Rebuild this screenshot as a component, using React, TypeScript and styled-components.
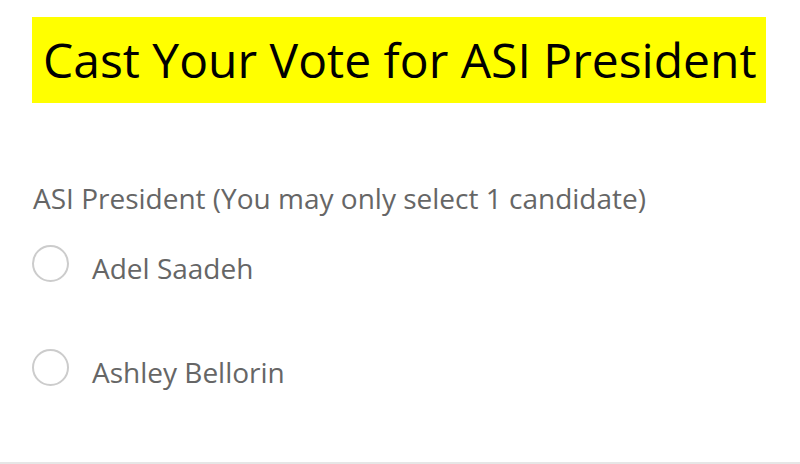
import React from 'react';
import styled, { createGlobalStyle } from 'styled-components';

const GlobalStyle = createGlobalStyle`
   html, body {
      margin: 0;
      padding: 0;
      background: #ffffff;
   }
   body {
      font-family: 'Open Sans', 'Noto Sans', sans-serif;
   }
`;

const Page = styled.div`
   width: 800px;
   height: 464px;
   box-sizing: border-box;
   border-bottom: 2px solid #e6e6e6;
   padding: 17px 0 0 32px;
   display: flex;
   flex-direction: column;
   align-items: flex-start;
`;

const Title = styled.h1`
   margin: 0;
   background: #ffff00;
   color: #000000;
   font-weight: 400;
   font-size: 48px;
   line-height: 86px;
   height: 86px;
   padding: 0 9px 0 11px;
   white-space: nowrap;
`;

const Question = styled.p`
   margin: 77px 0 0 1px;
   font-size: 28px;
   line-height: 36px;
   color: #666666;
`;

const Options = styled.div`
   display: flex;
   flex-direction: column;
   gap: 59px;
   margin-top: 25px;
`;

const Option = styled.label`
   display: flex;
   align-items: center;
   gap: 23px;
   font-size: 28px;
   color: #666666;
   cursor: pointer;
`;

const Radio = styled.span`
   width: 37px;
   height: 37px;
   box-sizing: border-box;
   border: 2px solid #cccccc;
   border-radius: 50%;
   flex-shrink: 0;
`;

const OptionText = styled.span`
   line-height: 36px;
   padding-top: 9px;
`;

const candidates = ['Adel Saadeh', 'Ashley Bellorin'];

export default function App() {
   return (
      <>
         <GlobalStyle />
         <Page>
            <Title>Cast Your Vote for ASI President</Title>
            <Question>ASI President (You may only select 1 candidate)</Question>
            <Options>
               {candidates.map((name) => (
                  <Option key={name}>
                     <Radio />
                     <OptionText>{name}</OptionText>
                  </Option>
               ))}
            </Options>
         </Page>
      </>
   );
}
